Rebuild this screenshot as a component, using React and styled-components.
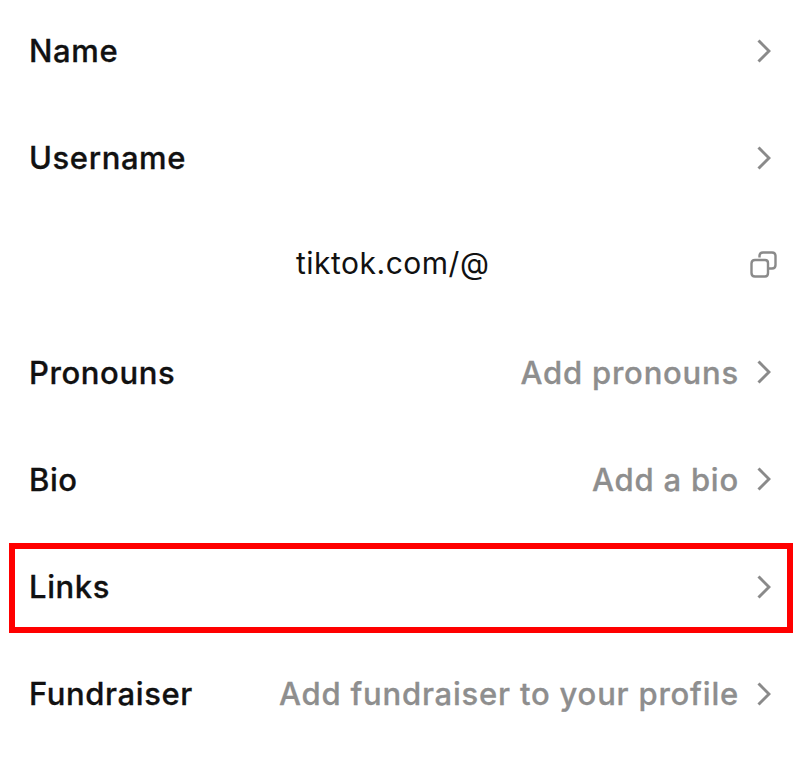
import React from 'react';
import styled, { createGlobalStyle } from 'styled-components';

const GlobalStyle = createGlobalStyle`
  html, body {
    margin: 0;
    padding: 0;
    background: #fff;
    overflow: hidden;
  }
`;

const Page = styled.div`
  width: 802px;
  height: 758px;
  overflow: hidden;
  font-family: Inter, "Liberation Sans", sans-serif;
`;

const List = styled.div`
  display: grid;
  grid-auto-rows: 107.2px;
  margin-top: -3px;
`;

const Row = styled.div`
  position: relative;
  display: flex;
  align-items: center;
  padding: 0 31px 0 29px;

  ${props => props.$highlight && `
    &::after {
      content: '';
      position: absolute;
      left: 9px;
      right: 9px;
      top: 10px;
      bottom: 7px;
      border: 6px solid #ff0000;
      pointer-events: none;
    }
  `}
`;

const Label = styled.span`
  font-size: 31px;
  font-weight: 500;
  letter-spacing: 0.6px;
  color: #111;
  -webkit-text-stroke: 0.3px #111;
`;

const Value = styled.span`
  margin-left: auto;
  font-size: 31px;
  font-weight: 500;
  letter-spacing: 0.8px;
  color: #8e8e8e;
  -webkit-text-stroke: 0.3px #8e8e8e;
`;

const Handle = styled.span`
  margin-left: 267px;
  margin-top: -3px;
  font-size: 30px;
  font-weight: 400;
  letter-spacing: 0.5px;
  color: #111;
`;

const Action = styled.svg`
  flex: none;
  margin-left: ${props => (props.$tight ? 'auto' : '18px')};
  margin-right: ${props => props.$pull || 0}px;
  color: #8a8a8a;
`;

const Chevron = ({ tight }) => (
  <Action $tight={tight} width="14" height="24" viewBox="0 0 14 24" fill="none">
    <path d="M1.5 1.5 L12 12 L1.5 22.5" stroke="currentColor" strokeWidth="3" />
  </Action>
);

const CopyIcon = () => (
  <Action $tight $pull={-6} width="27" height="27" viewBox="0 0 27 27" fill="none">
    <path
      d="M9.5 6.5 V5 Q9.5 1.5 13 1.5 H22 Q25.5 1.5 25.5 5 V14 Q25.5 17.5 22 17.5 H19 M5 9 H15 Q18 9 18 12 V22 Q18 25.5 15 25.5 H5 Q1.5 25.5 1.5 22 V12.5 Q1.5 9 5 9 Z"
      stroke="currentColor"
      strokeWidth="2.4"
    />
  </Action>
);

const rows = [
  { label: 'Name' },
  { label: 'Username' },
  { handle: 'tiktok.com/@' },
  { label: 'Pronouns', value: 'Add pronouns' },
  { label: 'Bio', value: 'Add a bio' },
  { label: 'Links', highlight: true },
  { label: 'Fundraiser', value: 'Add fundraiser to your profile' },
];

const App = () => (
  <Page>
    <GlobalStyle />
    <List>
      {rows.map((row, i) => (
        <Row key={i} $highlight={row.highlight}>
          {row.handle ? (
            <>
              <Handle>{row.handle}</Handle>
              <CopyIcon />
            </>
          ) : (
            <>
              <Label>{row.label}</Label>
              {row.value && <Value>{row.value}</Value>}
              <Chevron tight={!row.value} />
            </>
          )}
        </Row>
      ))}
    </List>
  </Page>
);

export default App;
